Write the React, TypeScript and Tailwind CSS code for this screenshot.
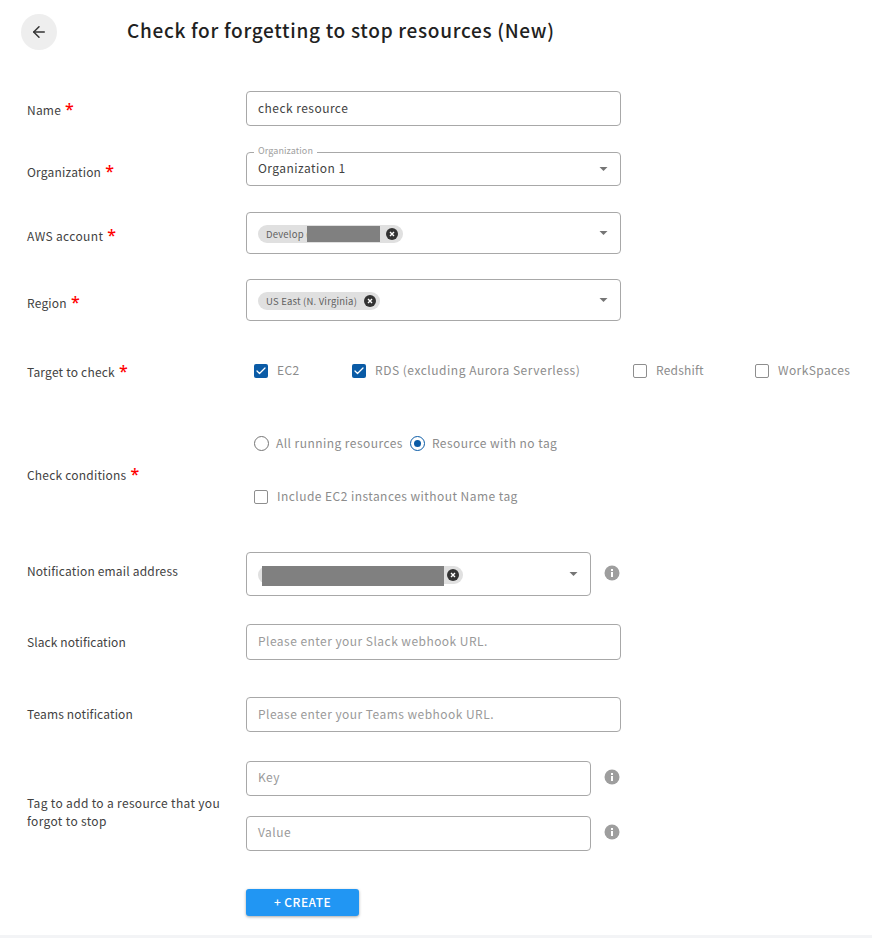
import { ArrowLeft, Check } from 'lucide-react';
import type { ReactNode } from 'react';

function Label({ text, required, className = '' }: { text: string; required?: boolean; className?: string }) {
  return (
    <div className={`w-[219px] shrink-0 text-[12px] leading-[18px] text-[#424242] ${className}`}>
      {text}
      {required && <span className="ml-[4px] font-['Noto_Sans'] text-[16px] leading-none font-medium text-[#ff0000]">*</span>}
    </div>
  );
}

function CaretDown() {
  return (
    <svg viewBox="0 0 10 5" className="h-[4px] w-[9px] fill-[#757575]">
      <path d="M0 0h10L5 5z" />
    </svg>
  );
}

function Chip({ text, width, closeRight = 'right-[5px]' }: { text?: string; width: string; closeRight?: string }) {
  return (
    <div className={`relative flex h-[18px] items-center rounded-full bg-[#e0e0e0] pl-2 text-[9.5px] tracking-[0.2px] text-[#616161] ${width}`}>
      <span>{text}</span>
      <span className={`absolute top-[3px] flex h-3 w-3 items-center justify-center rounded-full bg-[#333] text-white ${closeRight}`}>
        <svg viewBox="0 0 12 12" className="h-3 w-3 stroke-white" strokeWidth="1.4">
          <path d="M4 4l4 4M8 4l-4 4" />
        </svg>
      </span>
    </div>
  );
}

function Box({ className = '', children }: { className?: string; children: ReactNode }) {
  return (
    <div className={`relative flex items-center rounded-[4px] border border-[#a8a8a8] bg-white pl-[11px] text-[12px] tracking-[0.46px] ${className}`}>
      {children}
    </div>
  );
}

function Info({ className = '' }: { className?: string }) {
  return (
    <svg viewBox="0 0 16 16" className={`h-4 w-4 shrink-0 ${className}`}>
      <circle cx="8" cy="8" r="7.5" fill="#9e9e9e" />
      <rect x="7" y="7" width="2" height="5" fill="#fff" />
      <rect x="7" y="4" width="2" height="2" fill="#fff" />
    </svg>
  );
}

function CheckBox({ label, checked, className = '' }: { label: string; checked?: boolean; className?: string }) {
  return (
    <div className={`flex items-center gap-[9px] text-[12px] text-[#8c8c8c] ${className}`}>
      {checked ? (
        <span className="flex h-[14px] w-[14px] items-center justify-center rounded-[2px] bg-[#0a5ba6]">
          <Check className="h-[12px] w-[12px] text-white" strokeWidth={2.5} />
        </span>
      ) : (
        <span className="h-[14px] w-[14px] rounded-[2px] border-[1.5px] border-[#8e8e8e]" />
      )}
      <span className="-translate-y-px">{label}</span>
    </div>
  );
}

function Radio({ label, checked }: { label: string; checked?: boolean }) {
  return (
    <div className="flex items-center gap-[7px] text-[12px] tracking-[0.45px] text-[#8c8c8c]">
      <span className={`flex h-[15px] w-[15px] items-center justify-center rounded-full border-[1.5px] ${checked ? 'border-[#0a5ba6]' : 'border-[#757575]'}`}>
        {checked && <span className="h-[7px] w-[7px] rounded-full bg-[#0a5ba6]" />}
      </span>
      <span>{label}</span>
    </div>
  );
}

export default function App() {
  return (
    <div className="h-[938px] w-[872px] overflow-hidden bg-white font-['Noto_Sans_CJK_JP','Noto_Sans',sans-serif]">
      {/* Header */}
      <div className="flex items-center pl-[21px] pt-[14px]">
        <button className="flex h-9 w-9 items-center justify-center rounded-full bg-[#eeeeee] text-[#333]">
          <ArrowLeft className="h-[18px] w-[18px]" strokeWidth={2} />
        </button>
        <h1 className="ml-[70px] -translate-y-[2px] text-[19px] font-medium tracking-[0.7px] text-[#212121]">
          Check for forgetting to stop resources (New)
        </h1>
      </div>

      {/* Form */}
      <div className="pl-[27px]">
        <div className="mt-[41px] flex items-center">
          <Label text="Name" required className="translate-y-[1px] tracking-[0.2px]" />
          <Box className="h-[35px] w-[375px] pb-[2px] text-[#424242]">check resource</Box>
        </div>

        <div className="mt-[26px] flex items-center">
          <Label text="Organization" required className="translate-y-[3px] tracking-[0.2px]" />
          <Box className="h-[34px] w-[375px] justify-between pr-[12px] text-[#424242]">
            <span className="absolute -top-[8px] left-[7px] bg-white px-1 text-[9px] leading-[12px] tracking-[0.1px] text-[#a0a0a0]">Organization</span>
            <span className="-translate-y-px">Organization 1</span>
            <CaretDown />
          </Box>
        </div>

        <div className="mt-[26px] flex items-center">
          <Label text="AWS account" required className="translate-y-[3px] tracking-[0.35px]" />
          <Box className="h-[42px] w-[375px] justify-between pr-[12px]">
            <div className="relative mt-[2px]">
              <Chip text="Develop (" width="w-[145px]" />
              <span className="absolute left-[49px] top-px h-4 w-[73px] bg-[#808080]" />
            </div>
            <CaretDown />
          </Box>
        </div>

        <div className="mt-[25px] flex items-center">
          <Label text="Region" required className="translate-y-[3px] tracking-[0.2px]" />
          <Box className="h-[42px] w-[375px] justify-between pr-[12px]">
            <div className="mt-[2px]">
              <Chip text="US East (N. Virginia)" width="w-[122px]" closeRight="right-[4px]" />
            </div>
            <CaretDown />
          </Box>
        </div>

        <div className="mt-[41px] flex items-center">
          <Label text="Target to check" required className="translate-y-[1px] tracking-[0.2px]" />
          <div className="flex items-center pl-[8px]">
            <CheckBox label="EC2" checked className="w-[98px] tracking-[0.4px]" />
            <CheckBox label="RDS (excluding Aurora Serverless)" checked className="w-[281px] tracking-[0.52px]" />
            <CheckBox label="Redshift" className="w-[122px] tracking-[0.2px]" />
            <CheckBox label="WorkSpaces" className="tracking-[0.4px]" />
          </div>
        </div>

        <div className="mt-[54px] flex items-center">
          <Label text="Check conditions" required className="translate-y-[5px] tracking-[0.2px]" />
          <div className="pl-[8px]">
            <div className="flex items-center gap-[7px]">
              <Radio label="All running resources" />
              <Radio label="Resource with no tag" checked />
            </div>
            <CheckBox label="Include EC2 instances without Name tag" className="mt-[36px] tracking-[0.45px]" />
          </div>
        </div>

        <div className="mt-[46px] flex items-center">
          <Label text="Notification email address" className="-translate-y-[3px] tracking-[0.18px]" />
          <Box className="h-[44px] w-[345px] justify-between pr-[12px]">
            <div className="relative mt-[2px]">
              <Chip width="w-[205px]" closeRight="right-[4px]" />
              <span className="absolute left-[4px] top-0 h-5 w-[182px] bg-[#808080]" />
            </div>
            <CaretDown />
          </Box>
          <span className="ml-[13px]"><Info className="-translate-y-px" /></span>
        </div>

        <div className="mt-[28px] flex items-center">
          <Label text="Slack notification" className="tracking-[0.1px]" />
          <Box className="h-[36px] w-[375px] pb-[2px] text-[#9a9a9a]">Please enter your Slack webhook URL.</Box>
        </div>

        <div className="mt-[37px] flex items-center">
          <Label text="Teams notification" className="-translate-y-px tracking-[0.15px]" />
          <Box className="h-[35px] w-[375px] pb-[2px] text-[#9a9a9a]">Please enter your Teams webhook URL.</Box>
        </div>

        <div className="mt-[29px] flex items-center">
          <Label text="Tag to add to a resource that you forgot to stop" className="translate-y-[6px] pr-[10px] tracking-[0.33px]" />
          <div className="flex flex-col gap-[20px]">
            <div className="flex items-center gap-[13px]">
              <Box className="h-[35px] w-[345px] pb-[4px] text-[#9a9a9a]">Key</Box>
              <Info className="-translate-y-[2px]" />
            </div>
            <div className="flex items-center gap-[13px]">
              <Box className="h-[35px] w-[345px] pb-[4px] text-[#9a9a9a]">Value</Box>
              <Info className="-translate-y-[2px]" />
            </div>
          </div>
        </div>

        <div className="ml-[219px] mt-[38px]">
          <button className="flex h-[27px] w-[113px] items-center justify-center rounded-[3px] bg-[#2196f3] pb-[2px] text-[12px] font-medium tracking-[0.45px] text-white shadow-[0_1px_3px_rgba(0,0,0,0.35)]">
            + CREATE
          </button>
        </div>
      </div>

      <div className="mt-[19px] h-[3px] bg-[#f3f4f6]" />
    </div>
  );
}
